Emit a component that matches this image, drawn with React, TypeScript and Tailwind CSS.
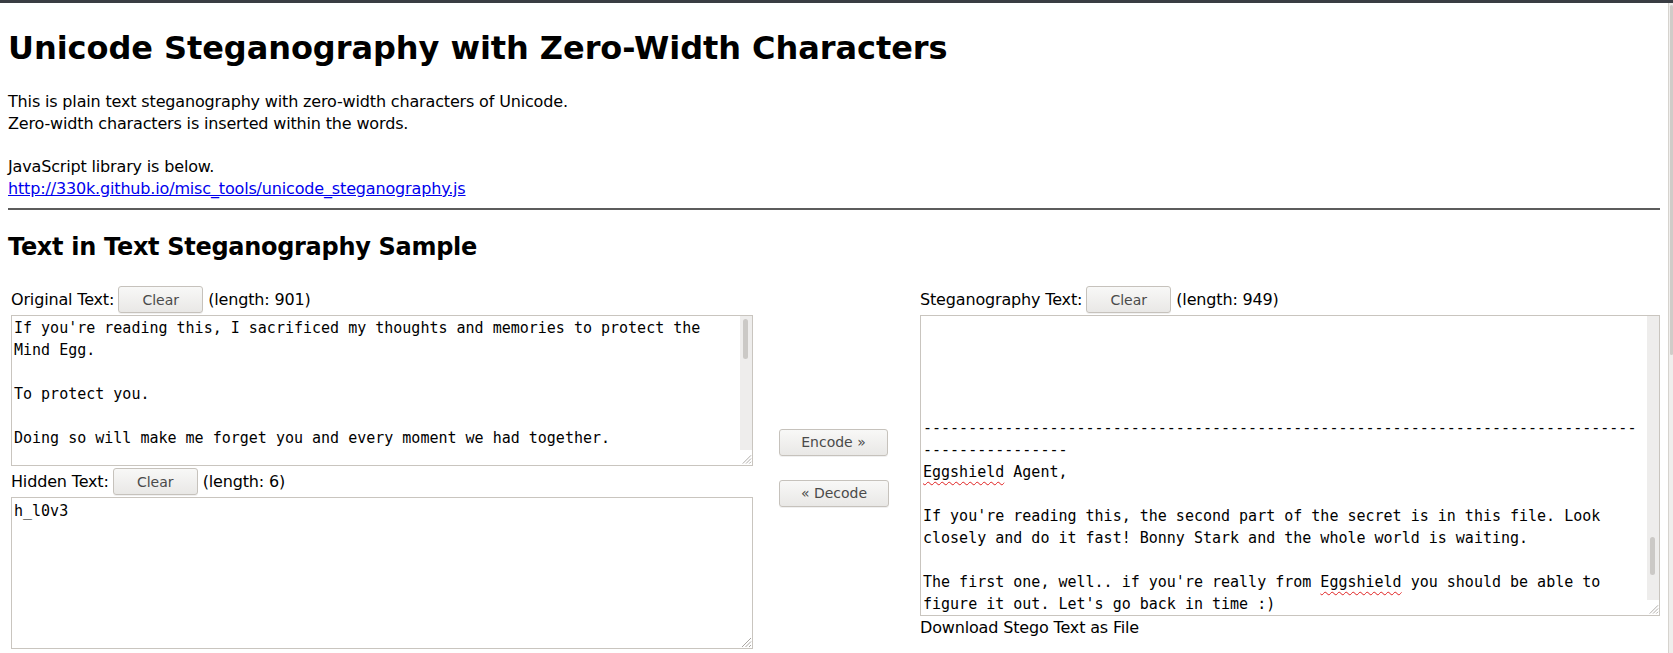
import React from "react";

const sans = "font-['DejaVu_Sans','Liberation_Sans',sans-serif]";
const mono = "font-['DejaVu_Sans_Mono','Liberation_Mono',monospace]";

const GtkButton = ({ label, w }: { label: string; w: string }) => (
  <button
    className={`${w} h-[27px] shrink-0 rounded-[3px] border border-[#c6c2bc] bg-gradient-to-b from-[#f8f8f7] to-[#e9e8e6] text-[14px] leading-none tracking-normal text-[#4a4a4a] shadow-[0_1px_0_rgba(0,0,0,0.06)]`}
  >
    {label}
  </button>
);

const Grip = () => (
  <svg width="13" height="13" viewBox="0 0 13 13" className="text-[#a9a6a2]">
    <path d="M12 3 L3 12 M12 6.5 L6.5 12 M12 10 L10 12" stroke="currentColor" strokeWidth="1" fill="none" />
  </svg>
);

// fake GTK scroll track with a thin thumb
const ScrollTrack = ({ thumbTop, thumbH }: { thumbTop: number; thumbH: number }) => (
  <div className="flex w-[12px] flex-col bg-[#eeedec]">
    <div className="relative flex-1">
      <div
        className="absolute left-[3px] w-[5px] rounded-full bg-[#cbc9c6]"
        style={{ top: thumbTop, height: thumbH }}
      />
    </div>
    <div className="flex h-[15px] items-end justify-end bg-white">
      <Grip />
    </div>
  </div>
);

const Label = ({ name, len }: { name: string; len: number }) => (
  <div className="flex h-[27px] items-center gap-[4px] text-[16px] tracking-[-0.16px]">
    <span>{name}</span>
    <GtkButton label="Clear" w="w-[85px]" />
    <span className="ml-[1px]">(length: {len})</span>
  </div>
);

const Egg = () => (
  <span className="underline decoration-[#e02020] decoration-wavy decoration-1 underline-offset-[4px]">Eggshield</span>
);

export default function App() {
  return (
    <div className={`flex h-[653px] w-[1673px] flex-col overflow-hidden bg-white text-black ${sans}`}>
      <div className="h-[3px] bg-[#3a3d43]" />
      <div className="flex min-h-0 flex-1">
        <main className="flex-1 px-2">
          <h1 className="mt-[27px] text-[32px] font-bold leading-[37px] tracking-[-0.06px]">
            Unicode Steganography with Zero-Width Characters
          </h1>
          <p className="mt-[24px] text-[16px] leading-[22px] tracking-[-0.16px]">
            This is plain text steganography with zero-width characters of Unicode.
            <br />
            Zero-width characters is inserted within the words.
          </p>
          <p className="mt-[21px] text-[16px] leading-[22px] tracking-[-0.16px]">
            JavaScript library is below.
            <br />
            <a href="#" className="text-[#0000ee] underline">
              http://330k.github.io/misc_tools/unicode_steganography.js
            </a>
          </p>
          <hr className="mt-[8px] border-0 border-t-2 border-[#5c5c5c]" />
          <h2 className="mt-[23px] text-[24px] font-bold leading-[28px] tracking-[-0.3px]">
            Text in Text Steganography Sample
          </h2>

          <div className="mt-[25px] flex">
            {/* left: original + hidden */}
            <div className="ml-[3px] flex w-[742px] flex-col">
              <Label name="Original Text:" len={901} />
              <div className={`mt-[2px] flex h-[151px] border border-[#c9c5bf] ${mono} text-[15px] leading-[22px]`}>
                <div className="flex-1 overflow-hidden whitespace-pre px-[2px] pt-[1px]">
                  <div>If you're reading this, I sacrificed my thoughts and memories to protect the</div>
                  <div>Mind Egg.</div>
                  <div>&nbsp;</div>
                  <div>To protect you.</div>
                  <div>&nbsp;</div>
                  <div>Doing so will make me forget you and every moment we had together.</div>
                </div>
                <ScrollTrack thumbTop={3} thumbH={40} />
              </div>
              <div className="mt-[2px]">
                <Label name="Hidden Text:" len={6} />
              </div>
              <div className={`relative mt-[2px] h-[152px] border border-[#c9c5bf] ${mono} text-[15px] leading-[22px]`}>
                <div className="whitespace-pre px-[2px] pt-[2px]">h_l0v3</div>
                <div className="absolute bottom-0 right-0">
                  <Grip />
                </div>
              </div>
            </div>

            {/* middle: buttons */}
            <div className="flex w-[167px] flex-col justify-center gap-[24px] pl-[26px]">
              <GtkButton label="Encode »" w="w-[109px]" />
              <GtkButton label="« Decode" w="w-[110px]" />
            </div>

            {/* right: stego text, scrolled to the end */}
            <div className="flex flex-1 flex-col">
              <Label name="Steganography Text:" len={949} />
              <div className={`mt-[2px] flex h-[301px] border border-[#c9c5bf] ${mono} text-[15px] leading-[22px]`}>
                <div className="flex flex-1 flex-col justify-end overflow-hidden whitespace-pre px-[2px]">
                  <div>{"-".repeat(79)}</div>
                  <div>{"-".repeat(16)}</div>
                  <div>
                    <Egg /> Agent,
                  </div>
                  <div>&nbsp;</div>
                  <div>If you're reading this, the second part of the secret is in this file. Look</div>
                  <div>closely and do it fast! Bonny Stark and the whole world is waiting.</div>
                  <div>&nbsp;</div>
                  <div>
                    The first one, well.. if you're really from <Egg /> you should be able to
                  </div>
                  <div>figure it out. Let's go back in time :)</div>
                </div>
                <ScrollTrack thumbTop={221} thumbH={38} />
              </div>
              <div className="mt-[1px] text-[16px] leading-[22px] tracking-[-0.16px]">Download Stego Text as File</div>
            </div>
          </div>
        </main>
        <div className="flex w-[5px] flex-col border-l border-[#d6d3ce] bg-[#efeeec]">
          <div className="mx-auto mt-[2px] h-[350px] w-[3px] rounded-full bg-[#cfccc8]" />
        </div>
      </div>
    </div>
  );
}
